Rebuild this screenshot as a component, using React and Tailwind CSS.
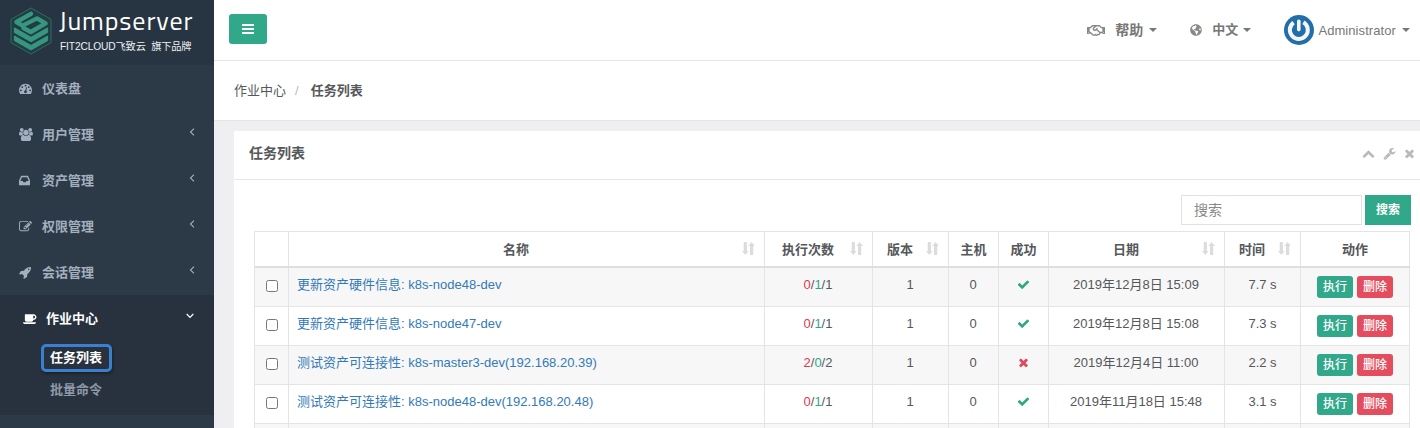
import React from "react";
import { FaRegHandshake, FaGlobeAmericas } from "react-icons/fa";

const P = {
  bars: "M1664 1344v128q0 26-19 45t-45 19h-1408q-26 0-45-19t-19-45v-128q0-26 19-45t45-19h1408q26 0 45 19t19 45zm0-512v128q0 26-19 45t-45 19h-1408q-26 0-45-19t-19-45v-128q0-26 19-45t45-19h1408q26 0 45 19t19 45zm0-512v128q0 26-19 45t-45 19h-1408q-26 0-45-19t-19-45v-128q0-26 19-45t45-19h1408q26 0 45 19t19 45z",
  check: "M1671 566q0 40-28 68l-724 724-136 136q-28 28-68 28t-68-28l-136-136-362-362q-28-28-28-68t28-68l136-136q28-28 68-28t68 28l294 295 656-657q28-28 68-28t68 28l136 136q28 28 28 68z",
  times: "M1490 1322q0 40-28 68l-136 136q-28 28-68 28t-68-28l-294-294-294 294q-28 28-68 28t-68-28l-136-136q-28-28-28-68t28-68l294-294-294-294q-28-28-28-68t28-68l136-136q28-28 68-28t68 28l294 294 294-294q28-28 68-28t68 28l136 136q28 28 28 68t-28 68l-294 294 294 294q28 28 28 68z",
  up: "M1683 1331l-166 165q-19 19-45 19t-45-19l-531-531-531 531q-19 19-45 19t-45-19l-166-165q-19-19-19-45.5t19-45.5l742-741q19-19 45-19t45 19l742 741q19 19 19 45.5t-19 45.5z",
  edit: "M888 1184l116-116-152-152-116 116v56h96v96h56zm440-720q-16-16-33 1l-350 350q-17 17-1 33t33-1l350-350q17-17 1-33zm80 594v190q0 119-84.5 203.5t-203.5 84.5h-832q-119 0-203.5-84.5t-84.5-203.5v-832q0-119 84.5-203.5t203.5-84.5h832q63 0 117 25 15 7 18 23 3 17-9 29l-49 49q-14 14-32 8-23-6-45-6h-832q-66 0-113 47t-47 113v832q0 66 47 113t113 47h832q66 0 113-47t47-113v-126q0-13 9-22l64-64q15-15 35-7t20 29zm-96-738l288 288-672 672h-288v-288zm444 132l-92 92-288-288 92-92q28-28 68-28t68 28l152 152q28 28 28 68t-28 68z",
  inbox: "M1023 960h316q-1-3-2.5-8t-2.5-8l-212-496h-708l-212 496q-1 2-2.5 8t-2.5 8h316l95 192h320zm513 30v482q0 26-19 45t-45 19h-1408q-26 0-45-19t-19-45v-482q0-62 25-123l238-552q10-25 36.5-42t52.5-17h832q26 0 52.5 17t36.5 42l238 552q25 61 25 123z",
  dash: "M384 1152q0-53-37.5-90.5t-90.5-37.5-90.5 37.5-37.5 90.5 37.5 90.5 90.5 37.5 90.5-37.5 37.5-90.5zm192-448q0-53-37.5-90.5t-90.5-37.5-90.5 37.5-37.5 90.5 37.5 90.5 90.5 37.5 90.5-37.5 37.5-90.5zm428 481l101-382q6-26-7.5-48.5t-38.5-29.5-48 6.5-30 39.5l-101 382q-60 5-107 43.5t-63 98.5q-20 77 20 146t117 89 146-20 89-117q16-60-6-117t-72-91zm660-33q0-53-37.5-90.5t-90.5-37.5-90.5 37.5-37.5 90.5 37.5 90.5 90.5 37.5 90.5-37.5 37.5-90.5zm-640-640q0-53-37.5-90.5t-90.5-37.5-90.5 37.5-37.5 90.5 37.5 90.5 90.5 37.5 90.5-37.5 37.5-90.5zm448 192q0-53-37.5-90.5t-90.5-37.5-90.5 37.5-37.5 90.5 37.5 90.5 90.5 37.5 90.5-37.5 37.5-90.5zm320 448q0 261-141 483-19 29-54 29h-1402q-35 0-54-29-141-221-141-483 0-182 71-348t191-286 286-191 348-71 348 71 286 191 191 286 71 348z",
  users: "M593 896q-162 5-265 128h-134q-82 0-138-40.5t-56-118.5q0-353 124-353 6 0 43.5 21t97.5 42.5 119 21.5q67 0 133-23-5 37-5 66 0 139 81 256zm1071 637q0 120-73 189.5t-194 69.5h-874q-121 0-194-69.5t-73-189.5q0-53 3.5-103.5t14-109 26.5-108.5 43-97.5 62-81 85.5-53.5 111.5-20q10 0 43 21.5t73 48 107 48 135 21.5 135-21.5 107-48 73-48 43-21.5q61 0 111.5 20t85.5 53.5 62 81 43 97.5 26.5 108.5 14 109 3.5 103.5zm-1024-1277q0 106-75 181t-181 75-181-75-75-181 75-181 181-75 181 75 75 181zm704 384q0 159-112.5 271.5t-271.5 112.5-271.5-112.5-112.5-271.5 112.5-271.5 271.5-112.5 271.5 112.5 112.5 271.5zm576 225q0 78-56 118.5t-138 40.5h-134q-103-123-265-128 81-117 81-256 0-29-5-66 66 23 133 23 59 0 119-21.5t97.5-42.5 43.5-21q124 0 124 353zm-128-609q0 106-75 181t-181 75-181-75-75-181 75-181 181-75 181 75 75 181z",
  coffee: "M1664 704q0-80-56-136t-136-56h-64v384h64q80 0 136-56t56-136zm-1664 704h1792q0 106-75 181t-181 75h-1280q-106 0-181-75t-75-181zm1856-704q0 159-112.5 271.5t-271.5 112.5h-64v32q0 92-66 158t-158 66h-704q-92 0-158-66t-66-158v-736q0-26 19-45t45-19h1152q159 0 271.5 112.5t112.5 271.5z",
  rocket: "M1440 448q0-40-28-68t-68-28-68 28-28 68 28 68 68 28 68-28 28-68zm224-288q0 249-75.5 430.5t-253.5 360.5q-81 80-195 176l-20 379q-2 16-16 26l-384 224q-7 4-16 4-12 0-23-9l-64-64q-13-14-8-32l85-276-281-281-276 85q-3 1-9 1-14 0-23-9l-64-64q-17-19-5-39l224-384q10-14 26-16l379-20q96-114 176-195 188-187 358-258t431-71q14 0 24 9.5t10 22.5z",
  wrench: "M448 1472q0-26-19-45t-45-19-45 19-19 45 19 45 45 19 45-19 19-45zm644-420l-682 682q-37 37-90 37-52 0-91-37l-106-108q-38-36-38-90 0-53 38-91l681-681q39 98 114.5 173.5t173.5 114.5zm634-435q0 39-23 106-47 134-164.5 217.5t-258.5 83.5q-185 0-316.5-131.5t-131.5-316.5 131.5-316.5 316.5-131.5q58 0 121.5 16.5t107.5 46.5q16 11 16 28t-16 28l-293 169v224l193 107q5-3 79-48.5t135.5-81 70.5-35.5q15 0 23.5 10t8.5 25z",
};

function Icon({ d, className = "", w = 1792 }) {
  return (
    <svg viewBox={`0 0 ${w} 1792`} fill="currentColor" className={`shrink-0 ${className}`}>
      <path d={d} />
    </svg>
  );
}

function Logo() {
  return (
    <svg viewBox="0 0 42 48" className="h-[48px] w-[42px] shrink-0" fill="none">
      <path d="M21 1 41 12.4V35.6L21 47 1 35.6V12.4Z" fill="#223c44" stroke="#2c7569" strokeWidth="0.9" />
      <path
        d="M21 6.8 6.4 15 12.5 18.6 27 11.4 35.6 16.4 20.8 25 13.4 21"
        stroke="#37967f"
        strokeWidth="4.4"
        strokeLinejoin="round"
        strokeLinecap="round"
      />
      <g fill="#37967f" stroke="#37967f" strokeWidth="1" strokeLinejoin="round">
        <path d="M4.4 20.8 21 30.2 37.6 20.8V25.4L21 34.8 4.4 25.4Z" />
        <path d="M4.4 29 21 38.4 37.6 29V33.6L21 43 4.4 33.6Z" />
      </g>
    </svg>
  );
}

function Caret({ className = "" }) {
  return <span className={`h-0 w-0 border-x-4 border-t-4 border-x-transparent border-t-[#777] ${className}`} />;
}

const MENU = [
  { icon: P.dash, label: "仪表盘" },
  { icon: P.users, label: "用户管理", w: 1920, arrow: true },
  { icon: P.inbox, label: "资产管理", w: 1536, arrow: true },
  { icon: P.edit, label: "权限管理", arrow: true },
  { icon: P.rocket, label: "会话管理", w: 1664, arrow: true },
];

function Sidebar() {
  return (
    <aside className="flex w-[214px] shrink-0 flex-col bg-[#2c3a47] text-[13px] font-bold text-[#a3afbf]">
      <div className="flex h-[65px] items-start gap-[8px] bg-[#273441] pl-[10px] pt-[7px]">
        <Logo />
        <div className="flex flex-col whitespace-nowrap text-white">
          <span className="-ml-px font-[Titillium_Web,Roboto,sans-serif] text-[26px] font-normal leading-[27px] tracking-[0.9px]">Jumpserver</span>
          <span className="mt-[4px] text-[10.2px] font-normal leading-[18px] tracking-[-0.12px] text-[#eef1f3]">FIT2CLOUD飞致云&nbsp; 旗下品牌</span>
        </div>
      </div>
      {MENU.map((m) => (
        <div key={m.label} className="flex h-[46px] items-center pl-[19px] pr-[19px]">
          <span className="flex w-[23px]">
            <Icon d={m.icon} w={m.w} className="h-[13px] w-auto" />
          </span>
          <span className="pt-[2px]">{m.label}</span>
          {m.arrow && (
            <svg viewBox="0 0 6 8" className="mb-[5px] ml-auto h-[8px] w-[6px]" fill="none" stroke="currentColor" strokeWidth="1.1">
              <path d="M5 .7 1.5 4 5 7.3" />
            </svg>
          )}
        </div>
      ))}
      <div className="flex h-[120px] flex-col bg-[#27323e]">
        <div className="flex h-[46px] items-center pl-[23px] pr-[20px] text-white">
          <span className="flex w-[23px]">
            <Icon d={P.coffee} w={1920} className="h-[13px] w-auto" />
          </span>
          <span className="pt-[2px]">作业中心</span>
          <svg viewBox="0 0 8 6" className="mb-[5px] ml-auto h-[6px] w-[8px]" fill="none" stroke="currentColor" strokeWidth="1.2">
            <path d="M.7 1 4 4.5 7.3 1" />
          </svg>
        </div>
        <div className="ml-[41px] mt-[3px] flex h-[28px] w-[71px] items-center justify-center rounded-[5px] border-[3px] border-[#3a7fd0] pr-px leading-[20px] text-white shadow-[1px_2px_3px_rgba(0,0,0,0.35)]">
          任务列表
        </div>
        <div className="ml-[50px] mt-[8px] leading-[20px] text-[#8d98a8]">批量命令</div>
      </div>
    </aside>
  );
}

function Header() {
  return (
    <header className="flex h-[61px] shrink-0 items-center border-b border-[#e3e5e7] bg-white pl-[15px] pr-[10px] text-[13px] text-[#777]">
      <button className="mb-[2px] flex h-[30px] w-[38px] items-center justify-center rounded-[3px] bg-[#32a88a] pr-px text-white">
        <Icon d={P.bars} w={1664} className="h-[14px] w-auto" />
      </button>
      <div className="ml-auto flex items-center font-bold">
        <FaRegHandshake className="mr-[10px] h-[15px] w-[18px] text-[#888]" />
        <span className="text-[14px]">帮助</span>
        <Caret className="ml-[6px]" />
      </div>
      <div className="ml-[33px] flex items-center font-bold">
        <FaGlobeAmericas className="mr-[10px] h-[12px] w-[12px] text-[#888]" />
        <span>中文</span>
        <Caret className="ml-[5px]" />
      </div>
      <div className="ml-[33px] flex items-center">
        <svg viewBox="0 0 30 30" className="mr-[4px] h-[30px] w-[30px]">
          <circle cx="15" cy="15" r="15" fill="#226ea9" />
          <path d="M9.6 7.6A9 9 0 1 0 19.4 7.2" fill="none" stroke="#f4f7fa" strokeWidth="4" />
          <path d="M14.8 6.2V14.6" stroke="#f4f7fa" strokeWidth="3.6" strokeLinecap="round" />
        </svg>
        <span className="pt-px tracking-[0.08px]">Administrator</span>
        <Caret className="ml-[6px]" />
      </div>
    </header>
  );
}

function Sort() {
  return (
    <svg viewBox="0 0 13 13" className="absolute right-[9px] top-[10px] h-[13px] w-[13px]" fill="#dcdcdc">
      <path d="M1.7 0h3.2v9H6.6L3.4 13 0 9h1.7ZM8 13h3.2V4H13L9.5 0 6.3 4H8Z" />
    </svg>
  );
}

const COLS = "grid grid-cols-[34px_476px_108px_76px_50px_50px_176px_76px_109px]";

const HEADS = [
  ["", false],
  ["名称", true],
  ["执行次数", true],
  ["版本", true],
  ["主机", false],
  ["成功", false],
  ["日期", true],
  ["时间", true],
  ["动作", false],
];

const ROWS = [
  ["更新资产硬件信息: k8s-node48-dev", [0, 1, 1], true, "2019年12月8日 15:09", "7.7 s"],
  ["更新资产硬件信息: k8s-node47-dev", [0, 1, 1], true, "2019年12月8日 15:08", "7.3 s"],
  ["测试资产可连接性: k8s-master3-dev(192.168.20.39)", [2, 0, 2], false, "2019年12月4日 11:00", "2.2 s"],
  ["测试资产可连接性: k8s-node48-dev(192.168.20.48)", [0, 1, 1], true, "2019年11月18日 15:48", "3.1 s"],
];

function Cell({ children, className = "pt-[7px]" }) {
  return <div className={`border-r border-[#e2e4e6] text-center leading-[20px] ${className}`}>{children}</div>;
}

function Row({ row, odd }) {
  const [name, counts, ok, date, time] = row;
  return (
    <div className={`${COLS} h-[39px] border-b border-[#e2e4e6] ${odd ? "bg-[#f7f7f7]" : "bg-white"}`}>
      <Cell className="flex justify-center pt-[12px]">
        <span className="h-[12px] w-[12px] rounded-[2.5px] border border-[#777] bg-white" />
      </Cell>
      <Cell className="pl-[8px] pt-[7px] text-left! text-[#337ab7]">{name}</Cell>
      <Cell className="pr-px pt-[7px]">
        <span className="text-[#e0384f]">{counts[0]}</span>/<span className="text-[#2fa686]">{counts[1]}</span>/{counts[2]}
      </Cell>
      <Cell className="pr-px pt-[7px]">1</Cell>
      <Cell className="pr-px pt-[7px]">0</Cell>
      <Cell className="flex justify-center pt-[10px]">
        <Icon d={ok ? P.check : P.times} className={ok ? "h-[13px] w-[13px] text-[#2fa686]" : "h-[13px] w-[13px] text-[#e0485c]"} />
      </Cell>
      <Cell className="pr-px pt-[7px]">{date}</Cell>
      <Cell>{time}</Cell>
      <Cell className="flex justify-center gap-[4px] pt-[8px] text-[12px] font-medium text-white">
        <span className="h-[22px] w-[36px] rounded-[3px] bg-[#32a88a] leading-[22px]">执行</span>
        <span className="h-[22px] w-[36px] rounded-[3px] bg-[#e34d5e] leading-[22px]">删除</span>
      </Cell>
    </div>
  );
}

function Panel() {
  return (
    <section className="ml-[20px] mt-[10px] flex-1 bg-white">
      <div className="flex h-[49px] items-center border-b border-[#e3e5e7] pl-[15px] pr-[4px]">
        <h5 className="mb-[4px] text-[14px] font-bold leading-[20px]">任务列表</h5>
        <div className="mb-[4px] ml-auto flex items-center gap-[8px] text-[#b9b9b9]">
          <Icon d={P.up} className="h-[13px] w-[13px]" />
          <Icon d={P.wrench} className="h-[13px] w-[13px]" />
          <Icon d={P.times} className="-ml-px h-[13px] w-[13px]" />
        </div>
      </div>
      <div className="flex justify-end gap-[3px] pr-[9px] pt-[15px]">
        <input
          placeholder="搜索"
          className="h-[30px] w-[181px] border border-[#dfe1e3] bg-white px-[12px] text-[14px] placeholder:text-[#888]"
        />
        <button className="h-[30px] w-[46px] bg-[#32a88a] text-[12px] font-bold text-white">搜索</button>
      </div>
      <div className="ml-[20px] mt-[6px] w-[1156px] border-l border-t border-[#e2e4e6]">
        <div className={`${COLS} h-[36px] border-b-2 border-[#dddfe1] font-bold`}>
          {HEADS.map(([h, s], i) => (
            <Cell key={i} className={s ? "relative pr-[21px] pt-[8px]" : "pt-[8px]"}>
              {h}
              {s && <Sort />}
            </Cell>
          ))}
        </div>
        {ROWS.map((r, i) => (
          <Row key={i} row={r} odd={i % 2 === 0} />
        ))}
        <div className={`${COLS} h-[39px] bg-[#f7f7f7]`}>
          {HEADS.map((_, i) => (
            <Cell key={i} />
          ))}
        </div>
      </div>
    </section>
  );
}

export default function App() {
  return (
    <div className="flex h-[428px] w-[1420px] overflow-hidden bg-[#efeff1] font-['Liberation_Sans','Noto_Sans_CJK_SC',sans-serif] text-[13px] text-[#55585b]">
      <Sidebar />
      <main className="flex min-w-0 flex-1 flex-col">
        <Header />
        <div className="flex h-[60px] shrink-0 items-center border-b border-[#e3e5e7] bg-white pl-[20px]">
          <span>作业中心</span>
          <span className="pl-[9px] pr-[12px] text-[#bbb]">/</span>
          <strong>任务列表</strong>
        </div>
        <Panel />
      </main>
    </div>
  );
}
